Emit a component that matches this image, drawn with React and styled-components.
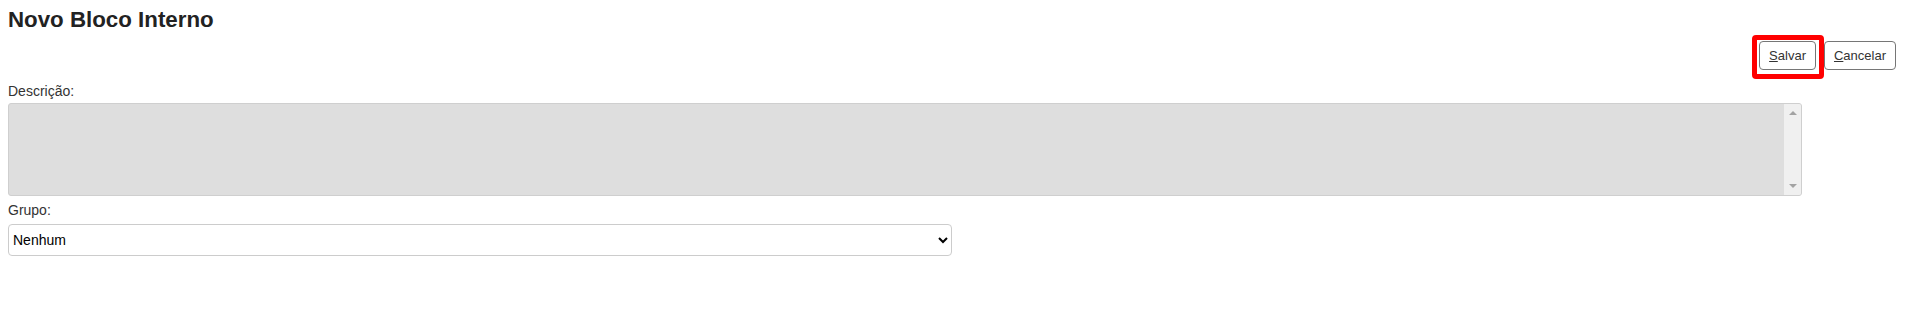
import React from "react";
import styled, { createGlobalStyle } from "styled-components";

const GlobalStyle = createGlobalStyle`
  html, body { margin: 0; padding: 0; background: #fff; }
  body { font-family: "Liberation Sans", Arial, sans-serif; }
`;

const Page = styled.div`
  padding: 7px 11px 0 8px;
  display: flex;
  flex-direction: column;
  align-items: flex-start;
`;

const Title = styled.h1`
  margin: 0;
  font-size: 22.3px;
  line-height: 25px;
  font-weight: bold;
  color: #222;
`;

const Toolbar = styled.div`
  align-self: stretch;
  display: flex;
  justify-content: flex-end;
  gap: 8px;
  margin-top: 9px;
`;

const Highlight = styled.span`
  position: relative;
  display: inline-flex;
  &::after {
    content: "";
    position: absolute;
    top: -6px;
    left: -7px;
    right: -8px;
    bottom: -9px;
    border: 5px solid #ff0000;
    border-radius: 4px;
    pointer-events: none;
  }
`;

const Button = styled.button`
  font-family: "Liberation Sans", Arial, sans-serif;
  font-size: 13px;
  line-height: 15px;
  color: #333;
  background: #fff;
  border: 1px solid #767676;
  border-radius: 4px;
  padding: 6px 9px;
  margin: 0;
  cursor: pointer;
  u { text-decoration: underline; }
`;

const Label = styled.label`
  font-size: 14px;
  line-height: 16px;
  color: #333;
  margin-top: ${(p) => p.$top}px;
`;

const AreaWrap = styled.div`
  position: relative;
  margin-top: 4px;
  width: 1794px;
  height: 93px;
`;

const TextArea = styled.textarea`
  box-sizing: border-box;
  display: block;
  width: 100%;
  height: 100%;
  margin: 0;
  background: #dedede;
  border: 1px solid #cfcfcf;
  border-radius: 3px;
  resize: none;
  overflow: hidden;
  font-family: "Liberation Sans", Arial, sans-serif;
  font-size: 14px;
  padding: 4px 21px 4px 4px;
`;

const ScrollRail = styled.div`
  position: absolute;
  top: 1px;
  right: 1px;
  bottom: 1px;
  width: 17px;
  background: #f0f0f0;
  border-radius: 0 2px 2px 0;
  display: flex;
  flex-direction: column;
  justify-content: space-between;
  align-items: center;
  padding: 7px 0;
  box-sizing: border-box;
  pointer-events: none;
`;

const Arrow = styled.span`
  width: 0;
  height: 0;
  border-left: 4px solid transparent;
  border-right: 4px solid transparent;
  ${(p) =>
    p.$dir === "up"
      ? "border-bottom: 4px solid #a3a3a3;"
      : "border-top: 4px solid #a3a3a3;"}
`;

const Select = styled.select`
  box-sizing: border-box;
  width: 944px;
  height: 32px;
  margin-top: 6px;
  background: #fff;
  border: 1px solid #cccccc;
  border-radius: 4px;
  font-family: "Liberation Sans", Arial, sans-serif;
  font-size: 14px;
  color: #000;
  padding: 0;
`;

export default function App() {
  return (
    <>
      <GlobalStyle />
      <Page>
        <Title>Novo Bloco Interno</Title>
        <Toolbar>
          <Highlight>
            <Button type="button">
              <u>S</u>alvar
            </Button>
          </Highlight>
          <Button type="button">
            <u>C</u>ancelar
          </Button>
        </Toolbar>
        <Label $top={13}>Descrição:</Label>
        <AreaWrap>
          <TextArea disabled defaultValue="" />
          <ScrollRail>
            <Arrow $dir="up" />
            <Arrow $dir="down" />
          </ScrollRail>
        </AreaWrap>
        <Label $top={6}>Grupo:</Label>
        <Select defaultValue="0">
          <option value="0">Nenhum</option>
        </Select>
      </Page>
    </>
  );
}
